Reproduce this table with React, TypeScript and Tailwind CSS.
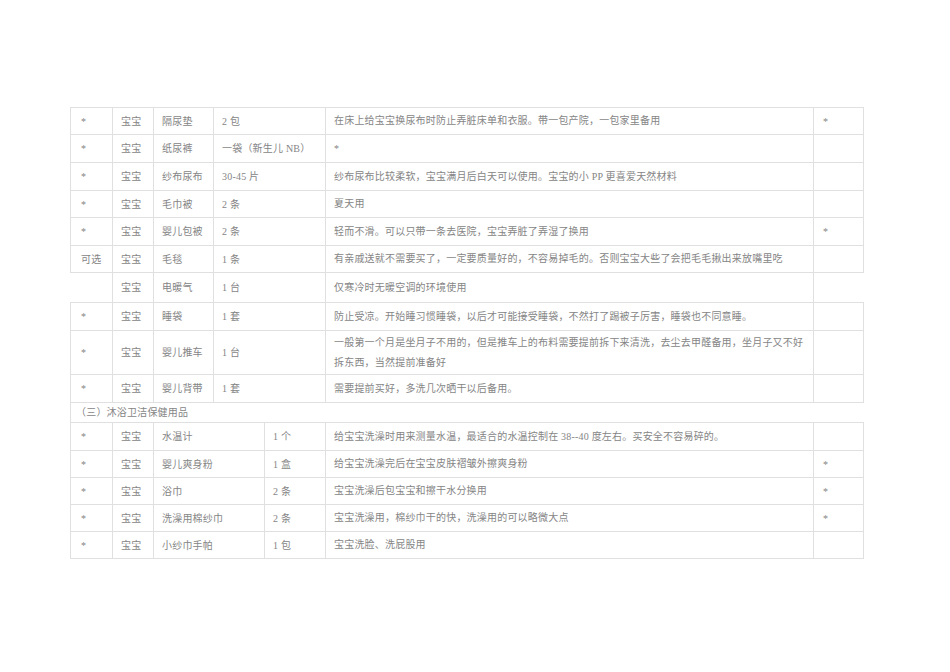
import React from "react"

type Row = {
  mark: string
  who: string
  name: string
  qty: string
  note: React.ReactNode
  star: string
  h: number
  open?: boolean
}

const upper: Row[] = [
  { mark: "*", who: "宝宝", name: "隔尿垫", qty: "2 包", note: "在床上给宝宝换尿布时防止弄脏床单和衣服。带一包产院，一包家里备用", star: "*", h: 27 },
  { mark: "*", who: "宝宝", name: "纸尿裤", qty: "一袋（新生儿 NB）", note: "*", star: "", h: 28 },
  { mark: "*", who: "宝宝", name: "纱布尿布", qty: "30-45 片", note: "纱布尿布比较柔软，宝宝满月后白天可以使用。宝宝的小 PP 更喜爱天然材料", star: "", h: 28 },
  { mark: "*", who: "宝宝", name: "毛巾被", qty: "2 条", note: "夏天用", star: "", h: 27 },
  { mark: "*", who: "宝宝", name: "婴儿包被", qty: "2 条", note: "轻而不滑。可以只带一条去医院，宝宝弄脏了弄湿了换用", star: "*", h: 28 },
  { mark: "可选", who: "宝宝", name: "毛毯", qty: "1 条", note: "有亲戚送就不需要买了，一定要质量好的，不容易掉毛的。否则宝宝大些了会把毛毛揪出来放嘴里吃", star: "", h: 27 },
  { mark: "", who: "宝宝", name: "电暖气", qty: "1 台", note: "仅寒冷时无暖空调的环境使用", star: "", h: 30, open: true },
  { mark: "*", who: "宝宝", name: "睡袋", qty: "1 套", note: "防止受凉。开始睡习惯睡袋，以后才可能接受睡袋，不然打了踢被子厉害，睡袋也不同意睡。", star: "", h: 28 },
  {
    mark: "*",
    who: "宝宝",
    name: "婴儿推车",
    qty: "1 台",
    note: (
      <>
        一般第一个月是坐月子不用的，但是推车上的布料需要提前拆下来清洗，去尘去甲醛备用，坐月子又不好
        <br />
        拆东西，当然提前准备好
      </>
    ),
    star: "",
    h: 44,
  },
  { mark: "*", who: "宝宝", name: "婴儿背带", qty: "1 套", note: "需要提前买好，多洗几次晒干以后备用。", star: "", h: 28 },
]

const lower: Row[] = [
  { mark: "*", who: "宝宝", name: "水温计", qty: "1 个", note: "给宝宝洗澡时用来测量水温，最适合的水温控制在 38--40 度左右。买安全不容易碎的。", star: "", h: 28 },
  { mark: "*", who: "宝宝", name: "婴儿爽身粉", qty: "1 盒", note: "给宝宝洗澡完后在宝宝皮肤褶皱外擦爽身粉", star: "*", h: 27 },
  { mark: "*", who: "宝宝", name: "浴巾", qty: "2 条", note: "宝宝洗澡后包宝宝和擦干水分换用", star: "*", h: 27 },
  { mark: "*", who: "宝宝", name: "洗澡用棉纱巾", qty: "2 条", note: "宝宝洗澡用，棉纱巾干的快，洗澡用的可以略微大点", star: "*", h: 27 },
  { mark: "*", who: "宝宝", name: "小纱巾手帕", qty: "1 包", note: "宝宝洗脸、洗屁股用", star: "", h: 27 },
]

const cell = "border border-[#e0e0e0] px-[8px] align-middle whitespace-nowrap"

function ListTable({ rows, cols }: { rows: Row[]; cols: number[] }) {
  return (
    <table className="table-fixed border-collapse w-[793px]">
      <colgroup>
        {cols.map((w, i) => (
          <col key={i} style={{ width: w }} />
        ))}
      </colgroup>
      <tbody>
        {rows.map((r, i) => (
          <tr key={i} style={{ height: r.h }}>
            <td className={`${cell} pl-[10px] ${r.open ? "border-l-0" : ""}`}>{r.mark}</td>
            <td className={cell}>{r.who}</td>
            <td className={cell}>{r.name}</td>
            <td className={cell}>{r.qty}</td>
            <td className={`${cell} leading-[20px]`}>{r.note}</td>
            <td className={`${cell} pl-[9px] ${r.open ? "border-r-0" : ""}`}>{r.star}</td>
          </tr>
        ))}
      </tbody>
    </table>
  )
}

export default function App() {
  return (
    <div
      className="min-h-[672px] w-[950px] bg-white pl-[70px] pt-[107px] text-[10px] tracking-[0.2px] text-[#858585]"
      style={{ fontFamily: '"Liberation Serif", "Noto Sans CJK SC", serif' }}
    >
      {/* 上半部分 */}
      <ListTable rows={upper} cols={[42, 41, 60, 112, 488, 50]} />

      {/* 分组标题 */}
      <div className="flex h-[19px] w-[793px] items-center border-l border-[#e0e0e0] pl-[5px]">
        （三）沐浴卫洁保健用品
      </div>

      {/* 下半部分 */}
      <ListTable rows={lower} cols={[42, 41, 111, 61, 488, 50]} />
    </div>
  )
}
